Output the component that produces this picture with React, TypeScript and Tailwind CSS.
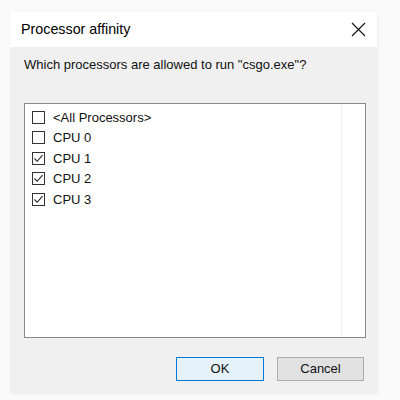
const CPUS = [
  { label: "<All Processors>", checked: false },
  { label: "CPU 0", checked: false },
  { label: "CPU 1", checked: true },
  { label: "CPU 2", checked: true },
  { label: "CPU 3", checked: true },
];

const Check = ({ checked }: { checked: boolean }) => (
  <span className="flex h-[13px] w-[13px] shrink-0 items-center justify-center border border-[#333] bg-white">
    {checked && (
      <svg width="11" height="11" viewBox="0 0 11 11" fill="none">
        <path d="M1.5 5.5 L4.2 8.3 L9.5 2.2" stroke="#222" strokeWidth="1.1" />
      </svg>
    )}
  </span>
);

export default function App() {
  return (
    <div
      className="h-[400px] w-[400px] bg-[#fafafa] pl-[10px] pt-[12px]"
      style={{ fontFamily: '"Liberation Sans", Arial, sans-serif' }}
    >
      <div className="flex h-[381px] w-[367px] flex-col shadow-[1px_1px_3px_rgba(0,0,0,0.06)]">
        <div className="flex h-[35px] shrink-0 items-center justify-between bg-white pl-[11px] pr-[11px]">
          <span className="text-[14.3px] text-black">Processor affinity</span>
          <svg width="15" height="15" viewBox="0 0 15 15" fill="none">
            <path d="M1 1 L14 14 M14 1 L1 14" stroke="#111" strokeWidth="1.1" />
          </svg>
        </div>
        <div className="flex flex-1 flex-col bg-[#f0f0f0] pl-[14px] pr-[11px] pt-[9px]">
          <p className="text-[13px] leading-[18px] text-[#111]">
            Which processors are allowed to run "csgo.exe"?
          </p>
          <div className="mt-[29px] flex h-[235px] w-[342px] border border-[#8a8a8a] bg-white">
            <div className="flex w-[317px] flex-col border-r border-[#f0f0f0] pl-[7px] pt-[3px]">
              {CPUS.map((c) => (
                <div key={c.label} className="flex h-[20.5px] items-center gap-[8px]">
                  <Check checked={c.checked} />
                  <span className="text-[13px] leading-none text-[#111]">{c.label}</span>
                </div>
              ))}
            </div>
          </div>
          <div className="mt-[19px] flex justify-end gap-[13px] pr-[2px]">
            <button className="h-[24px] w-[88px] border border-[#0078d7] bg-[#e5f1fb] text-[13px] text-[#111]">
              OK
            </button>
            <button className="h-[24px] w-[87px] border border-[#adadad] bg-[#e1e1e1] text-[13px] text-[#111]">
              Cancel
            </button>
          </div>
        </div>
      </div>
    </div>
  );
}
